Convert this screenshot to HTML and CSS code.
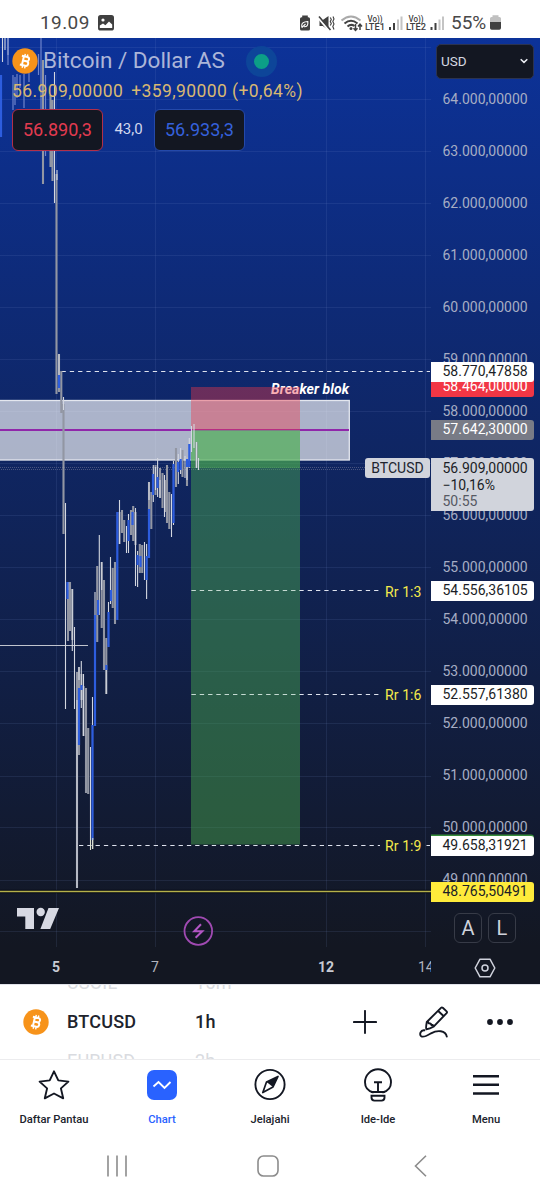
FILE: index.html
```html
<!DOCTYPE html>
<html lang="id">
<head>
<meta charset="utf-8">
<title>BTCUSD</title>
<link rel="stylesheet" href="styles.css">
</head>
<body>
<svg class="defs" width="0" height="0" aria-hidden="true">
  <symbol id="btc" viewBox="0 0 26 26">
    <circle cx="13" cy="13" r="12.7" fill="#f7931a"/>
    <g transform="rotate(13 13 13)" fill="none" stroke="#fff" stroke-width="2">
      <path d="M8.8 8.6H14.4a2.1 2.1 0 0 1 0 4.3H10.8M14.4 12.9a2.3 2.3 0 0 1 0 4.7H8.8M10.9 8.6V17.6"/>
      <path d="M11.7 6V8.6M14.3 6V8.6M11.7 17.6V20.2M14.3 17.6V20.2" stroke-width="1.4"/>
    </g>
  </symbol>
</svg>
<div class="screen">
  <header class="status">
    <span class="clock">19.09</span>
    <svg class="status-photo" width="16" height="16" viewBox="0 0 16 16"><rect width="16" height="15.6" rx="2.6" fill="#404040"/><circle cx="5" cy="5" r="1.6" fill="#fff"/><path d="M1.8 13V10.4L5 8.4 7.4 10.2 11 6.6 14.2 9.6V13z" fill="#fff"/></svg>
    <svg class="status-icons" width="146" height="18" viewBox="0 0 146 18" fill="none">
      <path d="M3.2 2.2V.4h5.6v1.800H9.400a1.600 1.600 0 0 1 1.600 1.600V14a1.600 1.600 0 0 1-1.600 1.600H2.600A1.600 1.600 0 0 1 1 14V3.800a1.600 1.600 0 0 1 1.600-1.600z" fill="#404040"/>
      <path d="M2.800 12.500V10q0-3 6-3.500Q9.500 12 5 11.800M2.800 12.600 6.500 9" stroke="#fff" stroke-width="1.100"/>
      <path d="M20.500 5H23.800L29.500 1V15L23.800 11H20.500z" fill="#404040"/><path d="M19 2.500 30 15.500" stroke="#fff" stroke-width="2"/><path d="M20 1.500 31.500 15" stroke="#404040" stroke-width="1.600"/><path d="M31.300 2.500 32.300 4.500 31.300 6.500 32.300 8.500 31.300 10.500M34 1.500 35 4 33.800 6.500 35 9 33.800 11.500 35 14.500" stroke="#404040" stroke-width="1.100"/>
      <path d="M42.500 5.500Q52-2.500 61.500 5.500" stroke="#aaa" stroke-width="2"/><path d="M45.500 8.500Q52 3 58.500 8.500M48.500 11.500Q52 8.500 55.500 11" stroke="#404040" stroke-width="2"/><circle cx="52" cy="13.500" r="1.500" fill="#404040"/>
      <path d="M56.500 9V15M54.500 13.200 56.500 15.400 58.500 13.200M61 15V9.500M59 11.500 61 9.200 63 11.500" stroke="#404040" stroke-width="1.500"/>
      <g fill="#404040"><rect x="90" y="12" width="2" height="3"/><rect x="94" y="8" width="2" height="7"/><rect x="131.500" y="12" width="2" height="3"/><rect x="135.500" y="8" width="2" height="7"/></g>
      <g fill="#c4c4c4"><rect x="98" y="4.500" width="2" height="10.500"/><rect x="101.500" y="1.500" width="2" height="13.500"/><rect x="139.500" y="4.500" width="2" height="10.500"/><rect x="143" y="1.500" width="2" height="13.500"/></g>
      <g class="volte"><text x="68.500" y="6.700" textLength="15" lengthAdjust="spacingAndGlyphs">Vo))</text><text x="66" y="15.200" textLength="20" lengthAdjust="spacingAndGlyphs">LTE1</text><text x="109.500" y="6.700" textLength="15" lengthAdjust="spacingAndGlyphs">Vo))</text><text x="107" y="15.200" textLength="20" lengthAdjust="spacingAndGlyphs">LTE2</text></g>
    </svg>
    <span class="battery-text">55%</span>
    <svg class="battery" width="11" height="16" viewBox="0 0 11 16"><path d="M2.500 2V.2h6V2H9.500a1.500 1.500 0 0 1 1.500 1.500V7H0V3.500A1.500 1.500 0 0 1 1.500 2z" fill="#c0c0c0"/><path d="M0 7H11v6a1.700 1.700 0 0 1-1.700 1.700H1.700A1.700 1.700 0 0 1 0 13z" fill="#404040"/></svg>
  </header>

  <main class="chart">
    <svg class="plot" width="540" height="946" viewBox="0 38 540 946" fill="none">
      <path class="grid" d="M56.500 38V947M155.500 38V947M326.500 38V947M425.500 38V947M0 47.500H431M0 99.500H431M0 151.500H431M0 203.500H431M0 255.500H431M0 307.500H431M0 359.500H431M0 411.500H431M0 463.500H431M0 515.500H431M0 567.500H431M0 619.500H431M0 671.500H431M0 723.500H431M0 776.500H431M0 827.500H431M0 880.500H431M0 931.500H431"/>
      <path d="M0 467.500H365M1 469.500H365" stroke="#5c6388" stroke-opacity=".75" stroke-dasharray="1 1"/>
      <rect x="-2" y="400.500" width="351.300" height="59.500" fill="#fff" fill-opacity=".65" stroke="#e4e7ef" stroke-width="1.300"/>
      <path d="M0 430H349" stroke="#9027aa" stroke-width="2.200"/>
      <text class="breaker" x="271" y="393.500" textLength="78">Breaker blok</text>
      <path class="dash" d="M61.500 371.500H430M191.500 590.500H379M191.500 694.500H379M79 845.500H380M426.500 845.500H430"/>
      <rect x="191" y="387" width="109" height="43" fill="#f23645" fill-opacity=".4"/>
      <rect x="191" y="430" width="109" height="414.500" fill="#4caf50" fill-opacity=".44"/>
      <rect x="191" y="430" width="109" height="38" fill="#4caf50" fill-opacity=".42"/>
      <path d="M191 430.500H300" stroke="#7b8084"/>
      <path class="dash" opacity=".6" d="M191.500 590.500H300M191.500 694.500H300"/>
      <path d="M0 645.500H88" stroke="#c0c4ce"/>
      <path d="M0 891.500H431" stroke="#050914" stroke-width="3.500"/><path d="M0 891.500H431" stroke="#b5b04a" stroke-width="1.400"/>
      <path class="body" d="M43 60V184M50.500 95V167M52.500 100V181M56.500 174V394M59 354V392M61.300 371V413M63.500 404V534M68 582V641M70 582V631M72.300 589V640M77 672V888M79 667V755M81.500 674V700M83.500 686V736M86 688V793M88.200 728V794M97.200 566V642M101.700 562V628M104 580V670M106.300 638V694M112.700 568V608M115 562V624M119.500 512V544M122 510V533M124.200 520V542M131 510V535M133.200 506V541M135.500 512V545M139.800 544V573M142.200 545V573M149 482V515M151.300 492V529M155.500 465V495M160 468V498M162.500 473V508M165 480V512M167 465V523M169.300 492V529M176 448V487M182.500 450V477M187 457V486M196.500 442V468"/>
      <path class="wick" d="M2.500 38V62M5 38V50M8 38V55M54.500 72V203M57 170V180M59 354V380M63.500 397V410M65.500 503V709M68 582V590M72.300 589V651M74.500 627V709M77 700V888M79 667V680M81.300 661V708M83.500 674V736M90.500 747V850M92.500 697V849M95 592V620M99.300 535V615M101.700 562V590M106.300 670V694M108.500 602V647M110.500 557V604M119.500 500V544M126.500 526V553M128.500 514V553M135.500 508V586M137.600 551V587M144.500 542V580M146.600 544V599M149 482V500M153.300 465V502M155.500 467V490M157.600 458V497M160 480V498M164.500 475V517M171.500 494V537M173.500 461V525M178.300 454V484M180.600 448V474M185 456V478M187 457V480M189.300 438V468M191.500 426V452M194 424V448M196.500 442V468M198.500 458V470"/>
      <path class="soft" d="M8 38V65M13 75V110M15 77V105M17 74V98M20 75V88M24 74V108M29 73V82M38.500 54V75M41 38V112M45.500 75V156"/>
      <path class="up" d="M1 75V137M59 375V388M67.500 582V599M79 688V745M81.500 685V690M92.500 725V840M95 615V726M98 600V615M106.300 665V670M108.500 612V647M111 590V601M117.300 512V620M128.500 520V541M132.500 512V525M137.600 555V565M140.500 556V567M146.600 556V580M149 509V558M153 474V495M157.600 477V488M173.500 464V523M178 462V472M180.600 459V470M187 459V467M189.300 444V467"/>
      <path d="M90.500 838V850M92.800 838V849" stroke="#dce1cf"/>
      <g fill="#d7d9e3"><path d="M17 908H34V929H25.300V916.500H17zM48.500 908H59L50.200 929H40.400z"/><circle cx="40.700" cy="912" r="4.200"/></g>
      <g stroke="#a04ab2" stroke-width="1.800"><circle cx="198.300" cy="931" r="13.800"/><path d="M201 924.300 194.300 931.200H202.300L195.600 937.700" stroke="#b356c4" stroke-width="2"/></g>
    </svg>

    <div class="pane">
      <div class="title"><svg width="26" height="26"><use href="#btc"/></svg><h1>Bitcoin / Dollar AS</h1><i class="live"></i></div>
      <div class="quote"><span>56.909,00000</span><span>+359,90000 (+0,64%)</span></div>
      <div class="trade"><button class="sell">56.890,3</button><span>43,0</span><button class="buy">56.933,3</button></div>
      <span class="pill symbol-tag">BTCUSD</span>
      <span class="rr rr3">Rr 1:3</span>
      <span class="rr rr6">Rr 1:6</span>
      <span class="rr rr9">Rr 1:9</span>
    </div>

    <aside class="axis">
      <button class="currency">USD<svg width="8" height="6" viewBox="0 0 8 6" fill="none"><path d="M.7 1.200 4 4.400 7.300 1.200" stroke="#eceef4" stroke-width="1.500"/></svg></button>
      <ol class="ticks">
        <li>64.000,00000</li><li>63.000,00000</li><li>62.000,00000</li><li>61.000,00000</li><li>60.000,00000</li><li>59.000,00000</li><li>58.000,00000</li><li>57.000,00000</li><li>56.000,00000</li><li>55.000,00000</li><li>54.000,00000</li><li>53.000,00000</li><li>52.000,00000</li><li>51.000,00000</li><li>50.000,00000</li><li>49.000,00000</li>
      </ol>
      <div class="scale"><button>A</button><button>L</button></div>
      <span class="tag tag-stop">58.464,00000</span>
      <span class="tag tag-high">58.770,47858</span>
      <span class="tag tag-entry">57.642,30000</span>
      <div class="tag tag-last"><span>56.909,00000</span><span>−10,16%</span><span class="countdown">50:55</span></div>
      <span class="tag tag-rr3">54.556,36105</span>
      <span class="tag tag-rr6">52.557,61380</span>
      <span class="tag tag-rr9">49.658,31921</span>
      <span class="tag tag-low">48.765,50491</span>
    </aside>

    <div class="dates"><b>5</b><span>7</span><b>12</b><span class="cut">14</span></div>
    <div class="settings"><svg width="22" height="20" viewBox="0 0 22 20" fill="none" stroke="#cfd2dc" stroke-width="1.500"><path d="M6 1.200H16L20.800 10 16 18.800H6L1.200 10z" stroke-linejoin="round"/><circle cx="11" cy="10" r="3"/></svg></div>
  </main>

  <section class="symbolbar">
    <div class="wheel">
      <div class="row ghost"><span class="ico"></span><span class="sym">USOIL</span><span>15m</span></div>
      <div class="row"><svg class="ico" width="26" height="26"><use href="#btc"/></svg><span class="sym">BTCUSD</span><span>1h</span></div>
      <div class="row ghost"><span class="ico"></span><span class="sym">EURUSD</span><span>2h</span></div>
    </div>
    <div class="actions">
      <svg width="24" height="24" viewBox="0 0 24 24" fill="none" stroke="#131722" stroke-width="1.900" stroke-linecap="round"><path d="M12 .9V23.100M.9 12H23.100"/></svg>
      <svg width="30" height="32" viewBox="0 0 30 32" fill="none" stroke="#131722" stroke-width="1.900" stroke-linejoin="round" stroke-linecap="round"><path d="M22 1.800Q22.900.9 23.800 1.800L27.600 5.400Q28.400 6.200 27.600 7.100L14.400 20.800Q11 22.800 7.400 23.300 6.600 22.500 7.800 16zM19.200 5 24.800 10.200M7.800 16.200Q9.400 15.600 9.700 17.300 12.500 17.600 12.500 19.200 14.300 18.600 14.400 20.200"/><path d="M5.400 24.300C1.500 23.800.2 28.600 2.200 30.200 4.600 32 8.500 29.400 12 27.300 18.500 23.800 26.500 24.300 27.800 30.600"/></svg>
      <svg width="26" height="6" viewBox="0 0 26 6" fill="#131722"><circle cx="3" cy="3" r="2.900"/><circle cx="13" cy="3" r="2.900"/><circle cx="23" cy="3" r="2.900"/></svg>
    </div>
  </section>

  <nav class="tabs">
    <a><svg width="32" height="32" viewBox="0 0 32 32" fill="none"><path d="M16 2.300 20.300 11.400 30.400 12.600 22.900 19.400 25.200 29.300 16 24.500 6.800 29.300 9.100 19.400 1.600 12.600 11.700 11.400z" stroke="#131722" stroke-width="1.900" stroke-linejoin="round"/></svg>Daftar Pantau</a>
    <a class="active"><svg width="32" height="32" viewBox="0 0 32 32" fill="none"><rect x="1" y="1" width="30" height="30" rx="7" fill="#2962ff"/><path d="M7.500 17.500 12.500 13 18.500 19 24.500 13" stroke="#fff" stroke-width="1.900"/></svg>Chart</a>
    <a><svg width="32" height="32" viewBox="0 0 32 32" fill="none"><circle cx="16" cy="15.500" r="14.600" stroke="#131722" stroke-width="1.900"/><path d="M24 7.500 19 18 8.800 23.500 12.500 13z" stroke="#131722" stroke-width="1.700" stroke-linejoin="round"/><path d="M24 7.500 19 18 12.500 13z" fill="#131722"/></svg>Jelajahi</a>
    <a><svg width="32" height="34" viewBox="0 0 32 34" fill="none" stroke="#131722" stroke-width="1.900"><path d="M11.500 24.500C5.500 23 3 19 3 14.300a13 13 0 0 1 26 0C29 19 26.500 23 20.500 24.500M8.800 24H23.200M12 14.200H20M16 14.200V24M9.500 27.800H22.500V29.500Q22.500 32.600 19.500 32.600H12.500Q9.500 32.600 9.500 29.500z"/></svg>Ide-Ide</a>
    <a><svg width="32" height="32" viewBox="0 0 32 32" fill="none"><path d="M3 7.200H29M3 15.800H29M3 24.400H29" stroke="#131722" stroke-width="2.500"/></svg>Menu</a>
  </nav>

  <footer class="system">
    <svg width="20" height="22" viewBox="0 0 20 22"><path d="M1 .5V21.500M10 .5V21.500M19 .5V21.500" stroke="#8c8c8c" stroke-width="1.600"/></svg>
    <svg width="22" height="22" viewBox="0 0 22 22"><rect x="1" y="1" width="20" height="20" rx="5.500" fill="none" stroke="#8c8c8c" stroke-width="1.600"/></svg>
    <svg width="13" height="22" viewBox="0 0 13 22"><path d="M12 .7 1.500 11 12 21.300" fill="none" stroke="#8c8c8c" stroke-width="1.600"/></svg>
  </footer>
</div>
</body>
</html>
```
FILE: styles.css
```css
* { box-sizing: border-box; }
body { margin: 0; background: #fff; font-family: Roboto, "Liberation Sans", sans-serif; }
button { font: inherit; padding: 0; margin: 0; }
svg { display: block; flex: none; }
.defs { position: absolute; }
.screen { width: 540px; height: 1200px; display: flex; flex-direction: column; overflow: hidden; background: #fff; }

.status { height: 38px; flex: none; display: flex; align-items: flex-start; padding: 13px 39px 0 40px; color: #484848; }
.clock { width: 58px; margin-top: -2px; font-size: 19px; line-height: 24px; letter-spacing: .4px; }
.status-photo { margin-top: 2px; }
.status-icons { margin: 2px 0 0 185px; }
.volte { fill: #404040; font-size: 9px; font-weight: 500; }
.battery-text { width: 39px; margin: -2px 0 0 6px; line-height: 24px; font-size: 19px; }
.battery { margin-top: 2px; }

.chart { position: relative; flex: none; height: 946px; display: grid; grid-template-columns: 431px 109px; grid-template-rows: 909px 37px; background: linear-gradient(#0c3299, #131722 96%); }
.plot { position: absolute; inset: 0; }
.grid { stroke: #7f93d0; stroke-opacity: .13; }
.dash { stroke: #dfe3ee; stroke-width: 1; stroke-dasharray: 4.300 4; }
.body { stroke: #9296a3; stroke-width: 2.100; }
.wick { stroke: #d3d7e0; stroke-width: 1.100; }
.soft { stroke: #6f84cc; stroke-width: 1.200; }
.up { stroke: #2d5dde; stroke-width: 2.200; }
.breaker { fill: #fff; font-size: 14px; font-weight: 700; font-style: italic; }

.pane { position: relative; padding: 9px 0 0 12px; }
.title { display: flex; align-items: center; height: 28px; }
.title h1 { margin: 0 0 0 5px; width: 203px; font-size: 22.500px; line-height: 26px; padding-bottom: 2px; font-weight: 400; color: #abb5d8; white-space: nowrap; }
.live { width: 31px; height: 31px; border-radius: 50%; border: 8.500px solid #0d4599; background: #0c9f87; }
.quote { display: flex; gap: 8px; height: 33px; align-items: center; padding-bottom: 1px; color: #d8b872; font-size: 17.500px; letter-spacing: .4px; white-space: nowrap; }
.trade { display: flex; align-items: center; padding-top: 1px; }
.trade span { width: 51px; padding: 0 0 2px; text-align: center; font-size: 15px; color: #d1d7ed; }
.trade button { width: 91px; height: 42px; padding-bottom: 2px; border-radius: 6px; background: #131722; font-size: 18px; }
.sell { border: 1px solid #b22f4a; color: #e33b50; }
.buy { border: 1px solid #2449aa; color: #3561dc; }
.pill { position: absolute; left: 365px; top: 420px; width: 65px; height: 20px; line-height: 21px; border-radius: 3px; background: #d1d4dc; color: #20242f; text-align: center; font-size: 14px; }
.rr { position: absolute; left: 385px; font-size: 14px; line-height: 16px; color: #f5ea4b; letter-spacing: .1px; }
.rr3 { top: 546px; }
.rr6 { top: 649px; }
.rr9 { top: 800px; }

.axis { position: relative; padding: 6px 6px 0 5px; }
.currency { display: flex; align-items: center; justify-content: space-between; width: 98px; height: 35px; padding: 0 5px 2px 4px; border: 1px solid #2b3350; border-radius: 5px; background: #131722; color: #d5d8e1; font-size: 13.500px; }
.ticks { list-style: none; margin: -6px 0 0; padding: 0 0 0 6.500px; color: #a6adc4; font-size: 14px; }
.ticks li { height: 52px; line-height: 52px; }
.scale { display: flex; gap: 6px; padding: 8px 0 0 18px; }
.scale button { width: 28px; height: 30px; border: 1px solid #373b47; border-radius: 6px; background: transparent; color: #cfd2dc; font-size: 20px; line-height: 26px; }
.tag { position: absolute; left: -.5px; width: 103.500px; height: 20px; padding-left: 12px; border-radius: 0 3px 3px 0; background: #fff; color: #1b1e26; font-size: 14px; line-height: 19px; white-space: nowrap; }
.tag-high { top: 324px; }
.tag-stop { top: 339px; background: #f23645; color: #fff; }
.tag-entry { top: 382px; background: #787b86; color: #fff; }
.tag-last { top: 420px; height: 53px; padding-top: 2px; display: flex; flex-direction: column; background: #d1d4dc; line-height: 16.500px; }
.countdown { color: #565963; }
.tag-rr3 { top: 543px; }
.tag-rr6 { top: 647px; }
.tag-rr9 { top: 798px; box-shadow: 0 -1.500px #388e3c; }
.tag-low { top: 844px; background: #ffeb3b; }

.dates { position: relative; display: grid; grid-template-columns: 106px 98px 145px 82px; overflow: hidden; padding-top: 12px; font-size: 14px; color: #b2b5be; }
.dates b { font-weight: 700; padding-left: 52px; color: #c8cbd3; }
.dates span { padding-left: 45px; }
.dates b + span + b { padding-left: 114px; }
.dates .cut { padding-left: 69px; }
.settings { position: relative; padding: 11px 0 0 43px; }

.symbolbar { flex: none; height: 76px; display: flex; justify-content: space-between; border-top: 1px solid #e1e3ea; border-bottom: 1px solid #ececee; overflow: hidden; }
.wheel { display: flex; flex-direction: column; flex: none; height: 117px; margin-top: -22px; }
.row { display: flex; align-items: center; height: 39px; padding-left: 23px; font-size: 18px; font-weight: 500; letter-spacing: .2px; color: #20232c; }
.row .ico { width: 26px; margin-right: 18px; flex: none; }
.row .sym { width: 128px; }
.ghost { color: #d9dbe0; font-weight: 400; }
.actions { display: flex; align-items: center; padding-right: 27px; }
.actions svg + svg { margin-left: 42px; }
.actions svg + svg + svg { margin-left: 38px; }

.tabs { flex: none; height: 70px; display: grid; grid-template-columns: repeat(5, 108px); }
.tabs a { display: flex; flex-direction: column; align-items: center; padding-top: 8px; font-size: 11.200px; line-height: 14px; font-weight: 500; color: #20232c; }
.tabs svg { height: 34px; margin-bottom: 11px; }
.tabs .active { color: #2962ff; }

.system { flex: none; height: 70px; display: flex; align-items: flex-start; padding: 25px 0 0 107px; }
.system svg + svg { margin-left: 130px; }
.system svg + svg + svg { margin-left: 135px; }
```
